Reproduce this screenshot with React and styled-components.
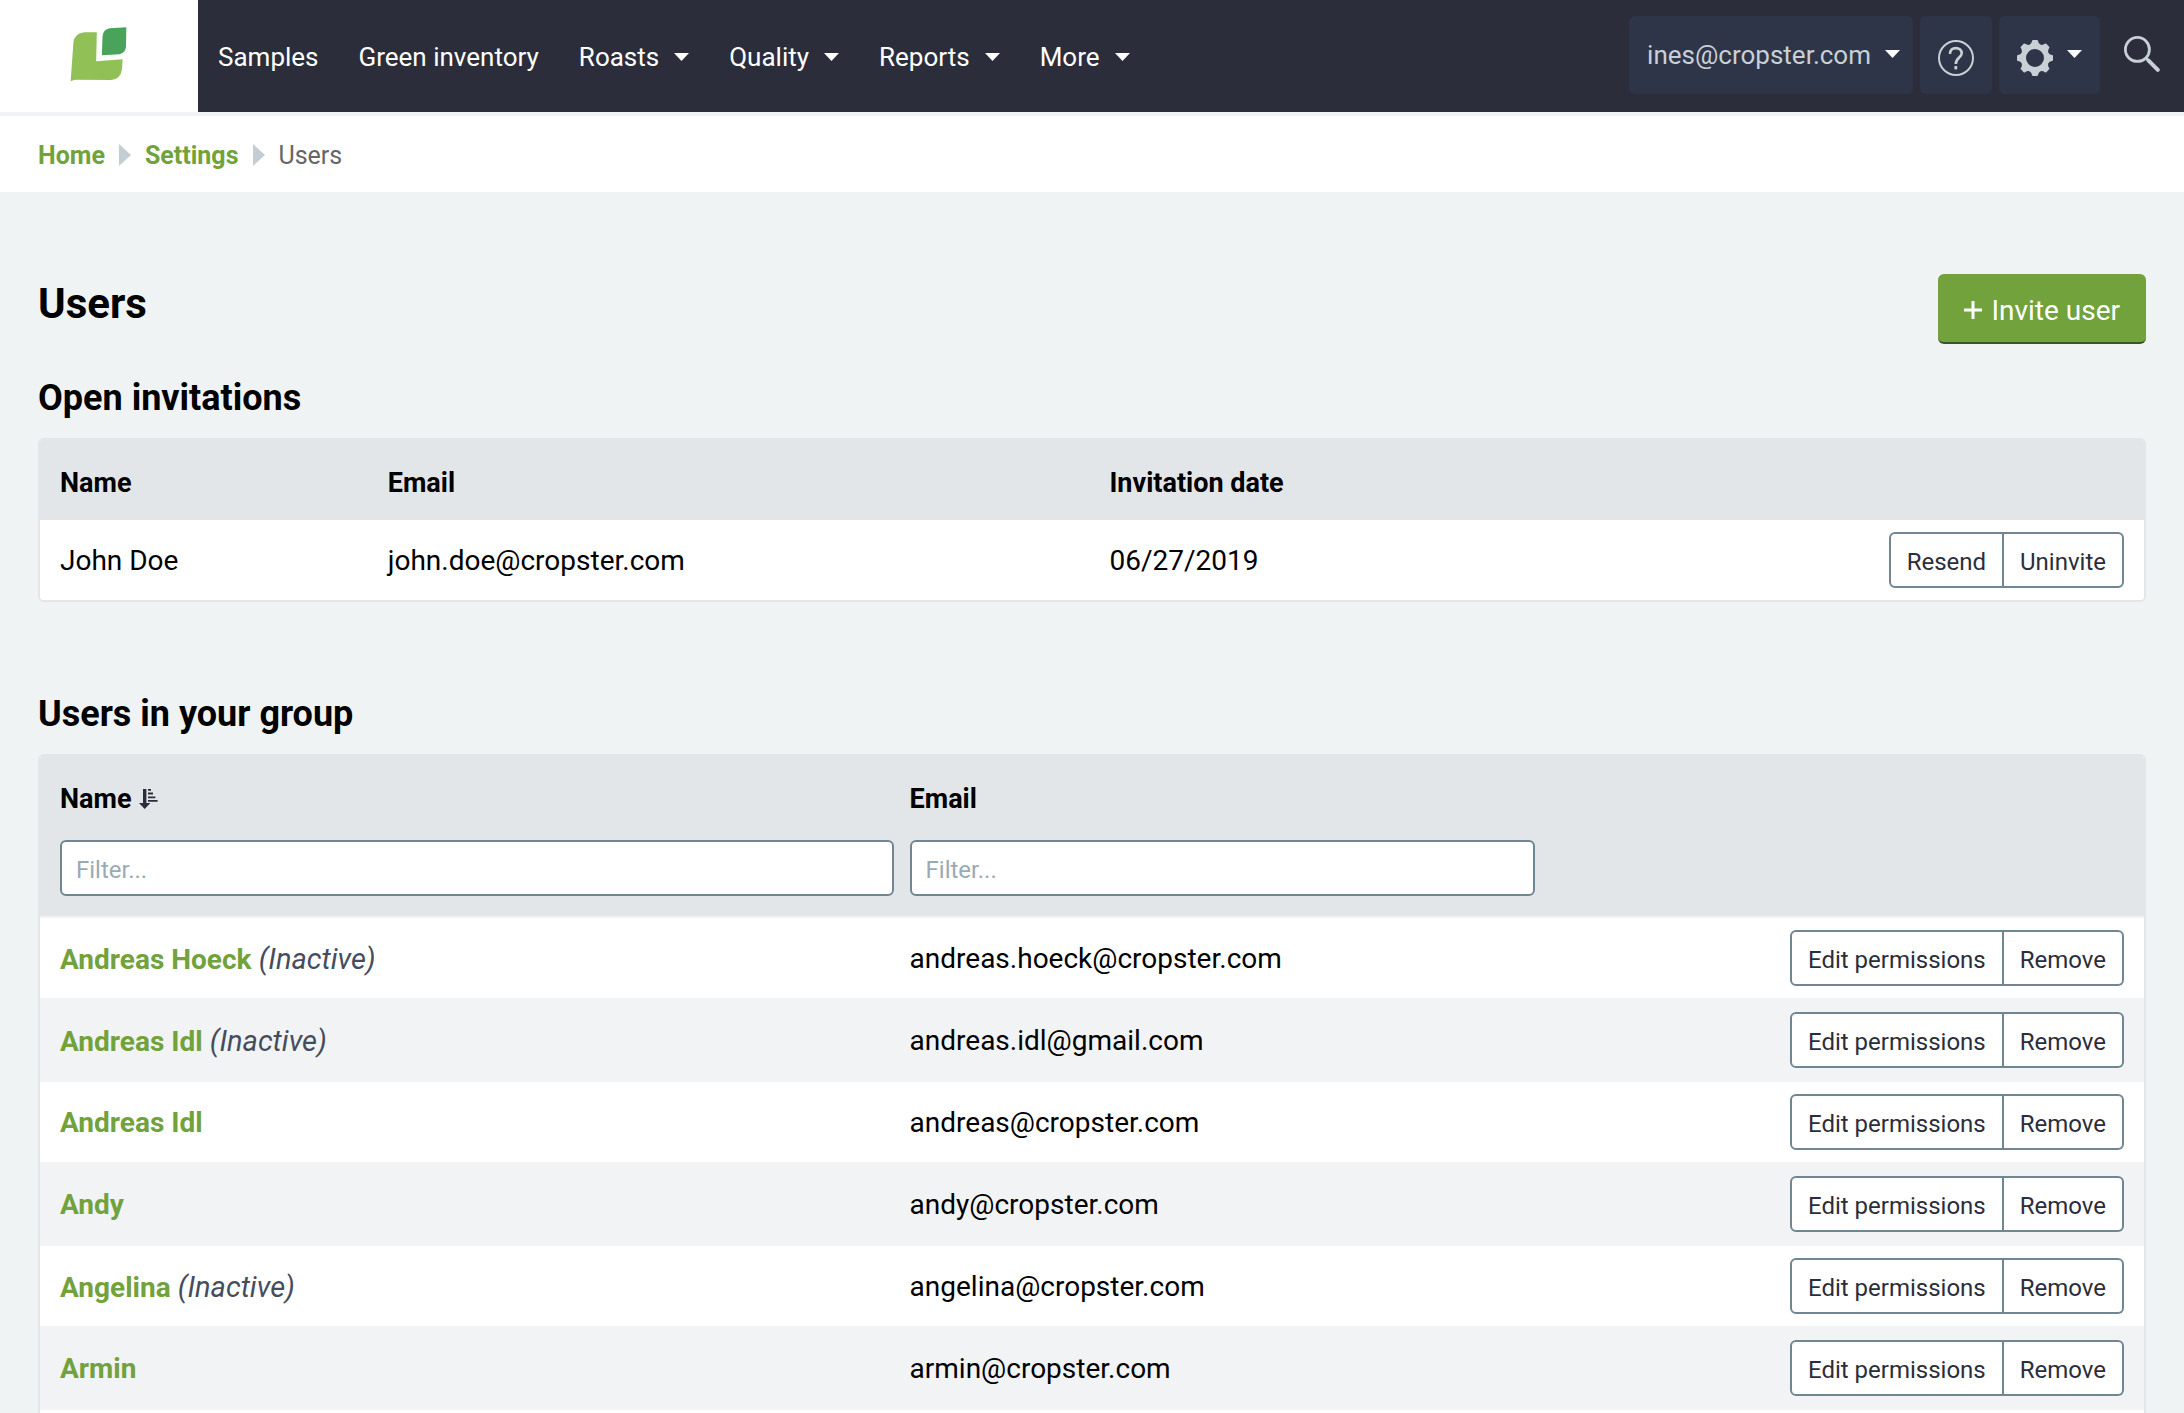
/// external ///
import React, { useState } from 'react'
import styled, { createGlobalStyle } from 'styled-components'

/***************************************
  DATA
***************************************/

const menu = [
  { label: 'Samples' },
  { label: 'Green inventory' },
  { label: 'Roasts', dropdown: true },
  { label: 'Quality', dropdown: true },
  { label: 'Reports', dropdown: true },
  { label: 'More', dropdown: true },
]

const invitations = [
  { name: 'John Doe', email: 'john.doe@cropster.com', date: '06/27/2019' },
]

const users = [
  { name: 'Andreas Hoeck', email: 'andreas.hoeck@cropster.com', inactive: true },
  { name: 'Andreas Idl', email: 'andreas.idl@gmail.com', inactive: true },
  { name: 'Andreas Idl', email: 'andreas@cropster.com' },
  { name: 'Andy', email: 'andy@cropster.com' },
  { name: 'Angelina', email: 'angelina@cropster.com', inactive: true },
  { name: 'Armin', email: 'armin@cropster.com' },
]

/***************************************
  COMPONENTS
***************************************/

const GlobalStyle = createGlobalStyle`
  * {
    box-sizing: border-box;
  }

  body {
    margin: 0;
    background: #eff3f4;
    color: #000000;
    font-family: Roboto, "Liberation Sans", sans-serif;
    font-size: 28px;
  }

  button, input {
    font-family: inherit;
    margin: 0;
  }

  svg {
    display: block;
    flex-shrink: 0;
  }
`

const Page = styled.div`
  min-height: 100vh;
  display: flex;
  flex-direction: column;
`

const Header = styled.header`
  display: flex;
  height: 112px;
  background: #2b2e3a;
`

const LogoLink = styled.a`
  width: 198px;
  padding: 0 2px 4px 0;
  display: flex;
  align-items: center;
  justify-content: center;
  background: #ffffff;
`

const Menu = styled.nav`
  display: flex;
  flex: 1;
`

const MenuItem = styled.button`
  display: flex;
  align-items: center;
  gap: 15px;
  padding: 2px 20px 0;
  border: none;
  background: none;
  color: #ffffff;
  font-size: 26px;
  text-decoration: none;
  white-space: nowrap;
  cursor: pointer;
`

const Tools = styled.div`
  display: flex;
  align-items: flex-start;
  gap: 7px;
  padding: 16px 24px 0 0;
`

const ToolButton = styled.button`
  height: 78px;
  display: flex;
  align-items: center;
  gap: 14px;
  padding: 0 ${(props) => props.$account ? 13 : 18}px 0 18px;
  border: none;
  border-radius: 6px;
  background: #2e3548;
  color: #c8d0d6;
  font-size: 26px;
  cursor: pointer;

  > svg:first-child {
    margin-top: 6px;
  }

  > svg:last-child:not(:first-child) {
    margin-bottom: 2px;
  }
`

const SearchButton = styled.button`
  height: 76px;
  padding: 0 0 0 17px;
  border: none;
  background: none;
  color: #c8d0d6;
  cursor: pointer;
`

const Breadcrumb = styled.nav`
  height: 80px;
  display: flex;
  align-items: center;
  gap: 14px;
  padding: 2px 38px 0;
  border-top: 4px solid #eff3f5;
  background: #ffffff;
  color: #666666;
  font-size: 25px;
`

const GreenLink = styled.a`
  color: #71a23c;
  font-weight: 700;
  text-decoration: none;
`

const Content = styled.main`
  flex: 1;
  display: flex;
  flex-direction: column;
  padding: 82px 38px 0;
`

const TitleRow = styled.div`
  display: flex;
  align-items: flex-start;
  justify-content: space-between;
`

const Title = styled.h1`
  margin: 6px 0 0;
  font-size: 42px;
  line-height: 48px;
`

const SectionTitle = styled.h2`
  margin: ${(props) => props.$spaced ? 90 : 32}px 0 18px;
  font-size: 36px;
  line-height: 44px;
`

const InviteButton = styled.button`
  height: 70px;
  display: flex;
  align-items: center;
  gap: 9px;
  padding: 4px 26px 0;
  border: none;
  border-bottom: 2px solid #3b5520;
  border-radius: 6px;
  background: #71a23c;
  color: #ffffff;
  font-size: 28px;
  cursor: pointer;
`

const Panel = styled.section`
  flex: ${(props) => props.$grow ? 1 : 'none'};
  border: 2px solid #e2e6e9;
  border-bottom-width: ${(props) => props.$grow ? 0 : 2}px;
  border-radius: ${(props) => props.$grow ? '6px 6px 0 0' : '6px'};
  background: #ffffff;
  overflow: hidden;
`

const Table = styled.table`
  width: 100%;
  border-bottom: ${(props) => props.$lined ? '2px solid #f2f3f5' : 'none'};
  border-spacing: 0;
  table-layout: fixed;
`

const HeadCell = styled.th`
  width: ${(props) => props.$width || 'auto'};
  padding: 28px 8px ${(props) => props.$filter ? 20 : 22}px;
  background: #e2e6e9;
  font-size: 27px;
  line-height: 30px;
  text-align: left;
  vertical-align: top;

  &:first-child {
    padding-left: 20px;
  }
`

const HeadLabel = styled.div`
  display: flex;
  align-items: center;
  gap: 8px;
`

const SortButton = styled.button`
  padding: 0;
  border: none;
  background: none;
  color: #2b2e3a;
  cursor: pointer;
`

const Filter = styled.input`
  display: block;
  width: 100%;
  height: 56px;
  margin-top: 26px;
  padding: 3px 14px 0;
  border: 2px solid #718693;
  border-radius: 6px;
  background: #ffffff;
  color: #2b2e3a;
  font-size: 24px;

  &::placeholder {
    color: #9aaab5;
  }
`

const Row = styled.tr`
  background: #ffffff;

  &:nth-child(even) {
    background: #f2f3f5;
  }
`

const Cell = styled.td`
  padding: 14px 8px 12px;
  border-top: ${(props) => props.$lined ? '2px solid #f2f3f5' : 'none'};
  line-height: 32px;

  &:first-child {
    padding-left: 20px;
  }

  &:last-child {
    padding-top: 12px;
    padding-right: 20px;
  }
`

const Inactive = styled.em`
  color: #454d5d;
  font-size: 29px;
`

const ButtonGroup = styled.div`
  display: flex;
  justify-content: flex-end;
`

const GroupButton = styled.button`
  height: 56px;
  padding: 3px 16px 0;
  border: 2px solid #718693;
  background: #ffffff;
  color: #2b2e3a;
  font-size: 24px;
  white-space: nowrap;
  cursor: pointer;

  &:first-child {
    border-radius: 6px 0 0 6px;
  }

  &:last-child {
    border-left: none;
    border-radius: 0 6px 6px 0;
  }
`

/***************************************
  ICONS
***************************************/

const Logo = () => (
  <svg width='57' height='55' viewBox='60 50 170 164' aria-hidden='true'>
    <path fill='#90c056' d='M62 212 L70 98 Q73 68 103 66 H140 L138 152 L217 146 L215 176 Q211 206 183 208 L78 207 Q69 208 62 212 Z' />
    <path fill='#49a35a' d='M157 78 Q159 57 178 54 L228 51 L227 110 Q224 128 208 131 L155 134 Z' />
  </svg>
)

const Caret = () => (
  <svg width='15' height='8' viewBox='0 0 15 8' aria-hidden='true'>
    <path fill='#ffffff' d='M0 0 H15 L7.5 8 Z' />
  </svg>
)

const Arrow = () => (
  <svg width='12' height='22' viewBox='0 0 12 22' aria-hidden='true'>
    <path fill='#c5cdd4' d='M0 0 L12 11 L0 22 Z' />
  </svg>
)

const HelpIcon = () => (
  <svg width='36' height='36' viewBox='0 0 36 36' fill='none' stroke='currentColor' aria-hidden='true'>
    <circle cx='18' cy='18' r='17' strokeWidth='2' />
    <path strokeWidth='2.6' d='M12 14 C12 10 14.3 8.1 17.9 8.1 C21.4 8.1 23.7 10.3 23.7 13.2 C23.7 17.5 17.8 17.8 17.8 24' />
    <path strokeWidth='2.8' d='M17.8 26 V29.4' />
  </svg>
)

const GearIcon = () => (
  <svg width='36' height='36' viewBox='0 0 36 36' fill='currentColor' aria-hidden='true'>
    <circle cx='18' cy='18' r='11.6' fill='none' stroke='currentColor' strokeWidth='5.2' />
    {[0, 45, 90, 135, 180, 225, 270, 315].map((angle) => (
      <path key={angle} transform={`rotate(${angle} 18 18)`} d='M16 0 H20 Q20.8 0 21 1 Q21.4 3.6 23.6 5 V7 H12.4 V5 Q14.6 3.6 15 1 Q15.2 0 16 0 Z' />
    ))}
  </svg>
)

const SearchIcon = () => (
  <svg width='36' height='36' viewBox='0 0 36 36' fill='none' stroke='currentColor' aria-hidden='true'>
    <circle cx='13.4' cy='13.4' r='12' strokeWidth='2.8' />
    <path strokeWidth='2.8' d='M21.6 21.8 L25 25' />
    <path strokeWidth='4' strokeLinecap='round' d='M24.6 24.6 L33.8 33.8' />
  </svg>
)

const PlusIcon = () => (
  <svg width='18' height='18' viewBox='0 0 18 18' fill='none' stroke='currentColor' strokeWidth='3' aria-hidden='true'>
    <path d='M9 0 V18 M0 9 H18' />
  </svg>
)

const SortIcon = () => (
  <svg width='19' height='20' viewBox='0 0 19 20' fill='currentColor' aria-hidden='true'>
    <path d='M4 0 H7.4 V14 H11.4 L5.7 20 L0 14 H4 Z' />
    <path d='M9 0 H12 V1.8 H9 Z M9 3.6 H14 V5.4 H9 Z M9 7.4 H16.4 V9.2 H9 Z M9 11 H18.6 V12.8 H9 Z' />
  </svg>
)

/***************************************
  MAIN
***************************************/

const App = () => {
  const [nameFilter, setNameFilter] = useState ('')
  const [emailFilter, setEmailFilter] = useState ('')

  const matches = (value, filter) => value.toLowerCase ().includes (filter.toLowerCase ())
  const visible = users.filter ((user) => matches (user.name, nameFilter) && matches (user.email, emailFilter))

  return (
    <Page>
      <GlobalStyle />
      <Header>
        <LogoLink href='#' aria-label='Cropster'><Logo /></LogoLink>
        <Menu>
          {menu.map (({ label, dropdown }) => dropdown
            ? <MenuItem key={label}>{label}<Caret /></MenuItem>
            : <MenuItem key={label} as='a' href='#'>{label}</MenuItem>
          )}
        </Menu>
        <Tools>
          <ToolButton $account><span>ines@cropster.com</span><Caret /></ToolButton>
          <ToolButton aria-label='Help'><HelpIcon /></ToolButton>
          <ToolButton aria-label='Settings'><GearIcon /><Caret /></ToolButton>
          <SearchButton aria-label='Search'><SearchIcon /></SearchButton>
        </Tools>
      </Header>
      <Breadcrumb aria-label='Breadcrumb'>
        <GreenLink href='#'>Home</GreenLink>
        <Arrow />
        <GreenLink href='#'>Settings</GreenLink>
        <Arrow />
        <span>Users</span>
      </Breadcrumb>
      <Content>
        <TitleRow>
          <Title>Users</Title>
          <InviteButton><PlusIcon />Invite user</InviteButton>
        </TitleRow>

        <SectionTitle>Open invitations</SectionTitle>
        <Panel>
          <Table>
            <thead>
              <tr>
                <HeadCell $width='16.15%'>Name</HeadCell>
                <HeadCell $width='34.3%'>Email</HeadCell>
                <HeadCell>Invitation date</HeadCell>
                <HeadCell aria-label='Actions' />
              </tr>
            </thead>
            <tbody>
              {invitations.map ((invitation) => (
                <Row key={invitation.email}>
                  <Cell>{invitation.name}</Cell>
                  <Cell>{invitation.email}</Cell>
                  <Cell>{invitation.date}</Cell>
                  <Cell>
                    <ButtonGroup>
                      <GroupButton>Resend</GroupButton>
                      <GroupButton>Uninvite</GroupButton>
                    </ButtonGroup>
                  </Cell>
                </Row>
              ))}
            </tbody>
          </Table>
        </Panel>

        <SectionTitle $spaced>Users in your group</SectionTitle>
        <Panel $grow>
          <Table $lined>
            <thead>
              <tr>
                <HeadCell $filter $width='40.95%'>
                  <HeadLabel>
                    <label htmlFor='filter-name'>Name</label>
                    <SortButton aria-label='Sort by name'><SortIcon /></SortButton>
                  </HeadLabel>
                  <Filter
                    id='filter-name'
                    placeholder='Filter...'
                    value={nameFilter}
                    onChange={(e) => setNameFilter (e.target.value)}
                  />
                </HeadCell>
                <HeadCell $filter $width='30.5%'>
                  <HeadLabel>
                    <label htmlFor='filter-email'>Email</label>
                  </HeadLabel>
                  <Filter
                    id='filter-email'
                    placeholder='Filter...'
                    value={emailFilter}
                    onChange={(e) => setEmailFilter (e.target.value)}
                  />
                </HeadCell>
                <HeadCell $filter aria-label='Actions' />
              </tr>
            </thead>
            <tbody>
              {visible.map ((user) => (
                <Row key={user.email}>
                  <Cell $lined>
                    <GreenLink href='#'>{user.name}</GreenLink>
                    {user.inactive && <Inactive> (Inactive)</Inactive>}
                  </Cell>
                  <Cell $lined>{user.email}</Cell>
                  <Cell $lined>
                    <ButtonGroup>
                      <GroupButton>Edit permissions</GroupButton>
                      <GroupButton>Remove</GroupButton>
                    </ButtonGroup>
                  </Cell>
                </Row>
              ))}
            </tbody>
          </Table>
        </Panel>
      </Content>
    </Page>
  )
}

/**************************************/

export default App
